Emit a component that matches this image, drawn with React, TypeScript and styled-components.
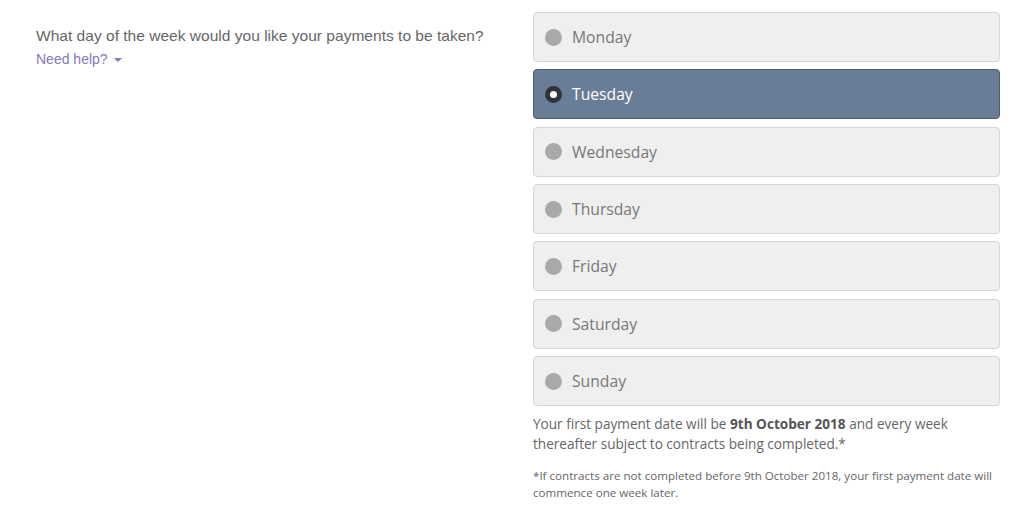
import React from "react";
import styled, { createGlobalStyle } from "styled-components";

const Global = createGlobalStyle`
  body { margin: 0; background: #fff; }
  * { box-sizing: border-box; }
`;

const Page = styled.div`
  display: flex;
  align-items: flex-start;
  width: 1024px;
  height: 521px;
  overflow: hidden;
`;

const Left = styled.div`
  width: 533px;
  padding: 26px 0 0 36px;
  display: flex;
  flex-direction: column;
`;

const Question = styled.div`
  font-family: "Liberation Sans", Arial, sans-serif;
  font-size: 15.55px;
  line-height: 20px;
  color: #666;
`;

const Help = styled.div`
  font-family: "Liberation Sans", Arial, sans-serif;
  font-size: 14px;
  line-height: 18px;
  color: #8877bb;
  display: flex;
  align-items: center;
  gap: 6px;
  margin-top: 4px;
`;

const Caret = styled.span`
  width: 0;
  height: 0;
  border-left: 4px solid transparent;
  border-right: 4px solid transparent;
  border-top: 4px solid #8877bb;
  margin-top: 2px;
`;

const Right = styled.div`
  width: 467px;
  padding-top: 12px;
  display: flex;
  flex-direction: column;
`;

const Options = styled.div`
  display: flex;
  flex-direction: column;
  gap: 7.35px;
`;

const Option = styled.div<{ $selected?: boolean }>`
  height: 50px;
  border-radius: 4px;
  border: 1px solid ${(p) => (p.$selected ? "#4d5c70" : "#d6d6d6")};
  background: ${(p) => (p.$selected ? "#6a7d96" : "#efefef")};
  display: flex;
  align-items: center;
  padding-left: 11px;
  gap: 10px;
  font-family: "Open Sans", sans-serif;
  font-size: 15.7px;
  color: ${(p) => (p.$selected ? "#fff" : "#777")};
`;

const Radio = styled.span<{ $selected?: boolean }>`
  width: 17px;
  height: 17px;
  border-radius: 50%;
  background: ${(p) => (p.$selected ? "#fff" : "#a9a9a9")};
  border: ${(p) => (p.$selected ? "5px solid #2f3338" : "none")};
  flex: none;
`;

const Info = styled.p`
  margin: 8px 0 0;
  font-family: "Open Sans", sans-serif;
  font-size: 13.6px;
  line-height: 20px;
  color: #666;
  b { font-weight: 700; color: #555; }
`;

const Note = styled.p`
  margin: 13px 0 0;
  font-family: "Open Sans", sans-serif;
  font-size: 11.6px;
  line-height: 17px;
  color: #666;
`;

const days = ["Monday", "Tuesday", "Wednesday", "Thursday", "Friday", "Saturday", "Sunday"];

export default function App() {
  return (
    <>
      <Global />
      <Page>
        <Left>
          <Question>What day of the week would you like your payments to be taken?</Question>
          <Help>
            Need help? <Caret />
          </Help>
        </Left>
        <Right>
          <Options>
            {days.map((d) => (
              <Option key={d} $selected={d === "Tuesday"}>
                <Radio $selected={d === "Tuesday"} />
                {d}
              </Option>
            ))}
          </Options>
          <Info>
            Your first payment date will be <b>9th October 2018</b> and every week thereafter subject to contracts being completed.*
          </Info>
          <Note>
            *If contracts are not completed before 9th October 2018, your first payment date will commence one week later.
          </Note>
        </Right>
      </Page>
    </>
  );
}
